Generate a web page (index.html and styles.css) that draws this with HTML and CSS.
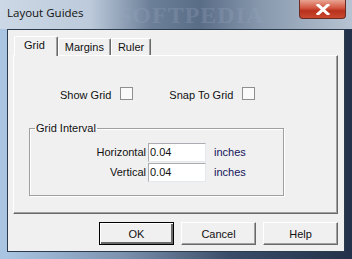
FILE: index.html
```html
<!DOCTYPE html>
<html lang="en">
<head>
    <meta charset="UTF-8">
    <title>Layout Guides</title>
    <link rel="stylesheet" href="styles.css">
</head>
<body>
<div class="window">
    <div class="titlebar">
        <span class="title">Layout Guides</span>
        <span class="watermark">SOFTPEDIA</span>
        <div class="close-btn">
            <svg width="14" height="11" viewBox="0 0 14 11">
                <path d="M2 1 L12 10 M12 1 L2 10" stroke="#fff" stroke-width="3" stroke-linecap="square"/>
            </svg>
        </div>
    </div>
    <div class="client">
        <div class="tabs">
            <div class="tab active">Grid</div>
            <div class="tab">Margins</div>
            <div class="tab">Ruler</div>
        </div>
        <div class="panel">
            <div class="check-row">
                <label class="check">Show Grid <span class="box"></span></label>
                <label class="check">Snap To Grid <span class="box"></span></label>
            </div>
            <fieldset class="group">
                <legend>Grid Interval</legend>
                <div class="field">
                    <span class="field-label">Horizontal</span>
                    <input type="text" value="0.04">
                    <span class="unit">inches</span>
                </div>
                <div class="field">
                    <span class="field-label">Vertical</span>
                    <input type="text" value="0.04">
                    <span class="unit">inches</span>
                </div>
            </fieldset>
        </div>
        <div class="buttons">
            <button class="btn default">OK</button>
            <button class="btn">Cancel</button>
            <button class="btn">Help</button>
        </div>
    </div>
</div>
</body>
</html>
```

FILE: styles.css
```css
body {
    margin: 0;
    font-family: "Liberation Sans", Arial, sans-serif;
    font-size: 11px;
    color: #111;
}
.window {
    width: 352px;
    height: 259px;
    box-sizing: border-box;
    padding: 0 7px 7px 7px;
    background: linear-gradient(90deg, #a9c5e2 0px, #a9c5e2 7px, #7d93b0 120px, #3a4c68 230px, #23324a 352px);
    display: flex;
    flex-direction: column;
    position: relative;
}
.titlebar {
    height: 29px;
    margin: 0 -7px;
    padding: 0 7px;
    display: flex;
    align-items: flex-start;
    position: relative;
    background: linear-gradient(90deg, #ccd8e5 0px, #bccadb 90px, #6d8099 150px, #5a6d87 200px, #8798ad 260px, #b7c3d2 352px);
}
.title {
    font-family: "Open Sans", "Liberation Sans", sans-serif;
    font-size: 11.5px;
    color: #111;
    margin-top: 5px;
}
.watermark {
    position: absolute;
    left: 118px;
    top: 2px;
    font-family: "Liberation Serif", serif;
    font-weight: bold;
    font-size: 24px;
    letter-spacing: 1px;
    color: rgba(150, 165, 190, 0.3);
}
.close-btn {
    position: absolute;
    right: 6px;
    top: 0;
    width: 47px;
    height: 19px;
    box-sizing: border-box;
    border: 1px solid #6b2a22;
    border-top: none;
    border-radius: 0 0 4px 4px;
    background: linear-gradient(180deg, #e8a492 0%, #d2553f 45%, #b8311c 60%, #c94a30 100%);
    display: flex;
    align-items: center;
    justify-content: center;
}
.client {
    flex: 1;
    background: #f0f0f0;
    border: 1px solid #2c3a4e;
    display: flex;
    flex-direction: column;
    padding: 6px 6px 0 5px;
}
.tabs {
    display: flex;
    align-items: flex-end;
    height: 19px;
    position: relative;
    z-index: 1;
}
.tab {
    height: 17px;
    box-sizing: border-box;
    padding: 2px 6px 0 6px;
    border-left: 1px solid #fff;
    border-top: 1px solid #fff;
    border-right: 1px solid #696969;
    box-shadow: inset -1px 0 #a0a0a0;
    border-radius: 2px 2px 0 0;
    font-size: 11px;
}
.tab.active {
    height: 20px;
    margin-left: 1px;
    margin-bottom: -1px;
    padding: 2px 12px 0 9px;
    background: #f0f0f0;
}
.panel {
    height: 159px;
    box-sizing: border-box;
    border-left: 1px solid #fff;
    border-top: 1px solid #fff;
    border-right: 1px solid #696969;
    border-bottom: 1px solid #696969;
    box-shadow: inset -1px -1px #a0a0a0;
    padding: 33px 0 0 15px;
}
.check-row {
    display: flex;
    gap: 36px;
    padding-left: 31px;
}
.check {
    display: flex;
    align-items: center;
    gap: 9px;
}
.box {
    width: 11px;
    height: 11px;
    border: 1px solid #8e8f8f;
    background: #fafafa;
    margin-top: -3px;
}
.group {
    margin: 21px 0 0 0;
    width: 255px;
    height: 74px;
    box-sizing: border-box;
    padding: 8px 0 0 0;
    border: 1px solid #a0a0a0;
    box-shadow: 1px 1px #fff, inset 1px 1px #fff;
    border-radius: 0;
}
.group legend {
    padding: 0 1px;
    margin-left: 5px;
    font-size: 11px;
}
.field {
    display: flex;
    align-items: center;
    height: 20px;
}
.field-label {
    width: 116px;
    text-align: right;
    padding-right: 2px;
}
.field input {
    width: 58px;
    height: 19px;
    box-sizing: border-box;
    border: 1px solid #abadb3;
    border-right-color: #e3e9ef;
    border-bottom-color: #e3e9ef;
    background: #fff;
    font-family: "Liberation Sans", Arial, sans-serif;
    font-size: 11px;
    padding: 0 1px;
    color: #111;
    margin: 0;
}
.unit {
    margin-left: 8px;
    color: #14145a;
}
.buttons {
    display: flex;
    justify-content: flex-end;
    gap: 7px;
    padding-top: 8px;
}
.btn {
    width: 75px;
    height: 23px;
    box-sizing: border-box;
    font-family: "Liberation Sans", Arial, sans-serif;
    font-size: 11px;
    color: #111;
    background: #f0f0f0;
    border: 1px solid;
    border-color: #fff #696969 #696969 #fff;
    box-shadow: inset -1px -1px #a0a0a0;
    padding: 0;
    margin: 0;
}
.btn.default {
    border: 1px solid #000;
    box-shadow: inset 1px 1px #fff, inset -2px -2px #696969;
}
```
